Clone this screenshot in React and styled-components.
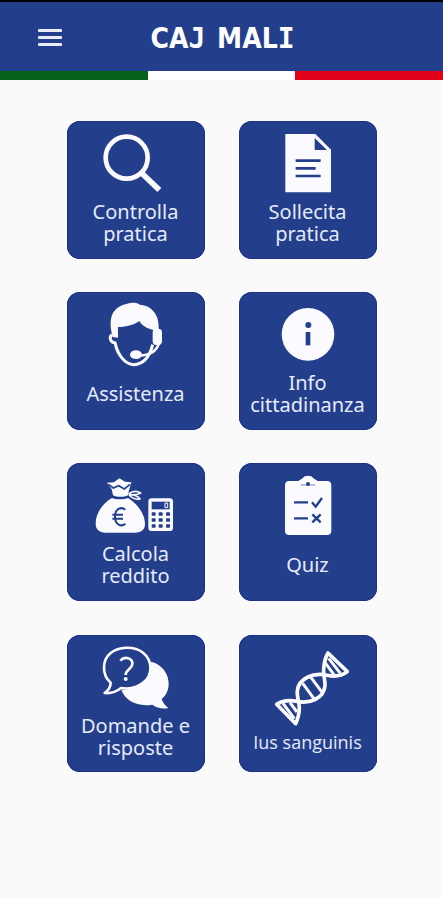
import React from "react";
import styled, { createGlobalStyle } from "styled-components";

const GlobalStyle = createGlobalStyle`
  :root {
    --blue: #233f8c;
    --edge: #1a3288;
    --page: #fafafa;
    --label: #e6eafa;
  }
  body {
    margin: 0;
    background-color: white;
    font-family: "Noto Sans", "Open Sans", sans-serif;
  }
`;

const Page = styled.div`
  height: 898px;
  background-color: var(--page);
  border-top: 2px solid black;
  box-sizing: border-box;
  overflow: hidden;
`;
const Header = styled.header`
  height: 69px;
  background-color: var(--blue);
  display: grid;
  grid-template-columns: 38px 24px 1fr 60px;
  align-items: center;
  box-sizing: border-box;
  padding-top: 1px;
`;
const MenuButton = styled.button`
  grid-column: 2;
  border: 0;
  padding: 0;
  background: none;
  display: flex;
  flex-direction: column;
  gap: 4px;
`;
const MenuBar = styled.span`
  width: 24px;
  height: 3px;
  border-radius: 1px;
  background-color: #e9edfb;
`;
const Title = styled.h1`
  margin: 0;
  padding-top: 4px;
  text-align: center;
  color: white;
  font-family: "DejaVu Sans Condensed", "DejaVu Sans", sans-serif;
  font-stretch: condensed;
  font-size: 28px;
  line-height: 40px;
  font-weight: 700;
  word-spacing: 3px;
  white-space: nowrap;
`;
const Slab = styled.span`
  font-family: "DejaVu Sans Mono", monospace;
  font-stretch: normal;
`;
const Flag = styled.div`
  display: flex;
  height: 9px;
`;
const Stripe = styled.div`
  flex: 1;
  background-color: ${(p) => p.$color};
`;
const Tiles = styled.main`
  display: grid;
  grid-template-columns: 138px 138px;
  grid-auto-rows: 137.5px;
  column-gap: 34px;
  row-gap: 33.7px;
  padding: 41px 0 0 67px;
`;
const Tile = styled.button`
  display: flex;
  flex-direction: column;
  align-items: center;
  padding: 0;
  border: 0;
  border-radius: 13px;
  background-color: var(--blue);
  box-shadow: inset 0 0 0 1px var(--edge);
  color: var(--label);
  font-family: inherit;
`;
const Picture = styled.svg`
  width: 138px;
  height: 80px;
  flex: none;
  overflow: visible;
  color: #fafaff;
`;
const Label = styled.span`
  height: 44px;
  margin-right: 1px;
  padding-top: ${(p) => p.$drop || 0}px;
  display: flex;
  flex-direction: column;
  justify-content: center;
  box-sizing: border-box;
  font-family: ${(p) => (p.$plain ? '"Open Sans"' : '"Noto Sans"')}, sans-serif;
  font-size: ${(p) => p.$size || 20}px;
  line-height: 22px;
  white-space: nowrap;
`;

const Search = () => (
  <g fill="none" stroke="currentColor">
    <circle cx="200" cy="128" r="63" strokeWidth="14" />
    <path d="M244 173l54 52" strokeWidth="17" />
  </g>
);

const Document = () => (
  <g>
    <path d="M160 57h90l47 47v128H160z" fill="currentColor" />
    <path d="M248 69v36h37z" fill="var(--blue)" />
    <path d="M191 137h75M191 160h60M191 183h75" stroke="var(--blue)" strokeWidth="8" />
  </g>
);

const Operator = () => (
  <g>
    <path
      d="M158 153C145 102 151 66 199 54c15-5 31-6 40 2 36 2 60 31 57 73l-17 3c-18-5-33-13-41-27-15 11-37 18-64 18v32z"
      fill="currentColor"
    />
    <path
      d="M156 146c-10 6-5 24 9 24 7 35 29 65 56 66 28-1 48-24 57-60"
      fill="none"
      stroke="currentColor"
      strokeWidth="9"
      strokeLinejoin="round"
    />
    <rect x="278" y="128" width="28" height="49" rx="11" fill="currentColor" />
    <path d="M297 172c-8 24-28 36-58 36" fill="none" stroke="currentColor" strokeWidth="8" />
    <ellipse cx="228" cy="206" rx="18" ry="13" fill="currentColor" />
  </g>
);

const Info = () => (
  <g>
    <circle cx="228" cy="145" r="79" fill="currentColor" />
    <circle cx="229" cy="117" r="9" fill="var(--blue)" />
    <path d="M221 138h14v40h-14z" fill="var(--blue)" />
  </g>
);

const Money = () => (
  <g>
    <path
      d="M156 123c8 5 39 5 48 0 28 17 51 48 51 78 0 17-12 26-30 26h-89c-18 0-29-11-29-27 0-31 21-62 49-77z"
      fill="currentColor"
    />
    <path
      d="M141 77l21-1 16-12 17 10 19 2-7 24-3 15c-13 6-33 6-45 0l-4-18z"
      fill="currentColor"
    />
    <path d="M145 82l15 11 16-7 17 10 17-14" fill="none" stroke="var(--blue)" strokeWidth="5" />
    <path
      d="M206 111c12-9 24-10 36-3-10 5-22 7-34 5 14 0 26 4 32 13-12 2-24-3-33-12"
      fill="none"
      stroke="currentColor"
      strokeWidth="5"
      strokeLinejoin="round"
    />
    <path
      d="M196 158c-12-10-31-3-31 21s19 32 31 21M157 173h32M157 185h32"
      fill="none"
      stroke="var(--blue)"
      strokeWidth="6"
    />
    <rect x="265" y="124" width="74" height="98" rx="10" fill="currentColor" />
    <path d="M275 134h54v23h-54z" fill="var(--blue)" />
    <path d="M315 138h8v14h-8z" fill="none" stroke="currentColor" strokeWidth="3" />
    <g fill="var(--blue)">
      {[166, 184, 202].map((y) =>
        [275, 296, 318].map((x) => (
          <rect key={`${x}-${y}`} x={x} y={y} width="12" height="10" rx="2" />
        ))
      )}
    </g>
  </g>
);

const Clipboard = () => (
  <g>
    <path
      d="M172 72h27l13-8c5-10 27-10 32 0l13 8h28q13 0 13 13v136q0 13-13 13H172q-13 0-13-13V85q0-13 13-13z"
      fill="currentColor"
    />
    <path d="M206 84h44" stroke="var(--blue)" strokeWidth="3" opacity="0.6" />
    <circle cx="228" cy="81" r="6" fill="var(--blue)" />
    <path
      d="M186 136h42M186 184h42M240 136l11 13 19-26M241 172l25 24M266 172l-25 24"
      fill="none"
      stroke="var(--blue)"
      strokeWidth="7"
    />
  </g>
);

const Chat = () => (
  <g>
    <path
      d="M273 98c34 8 54 38 53 68-1 20-9 34-21 45 4 12 12 20 20 26-17 4-34 0-48-10-45 7-79-10-93-43 52-4 93-31 89-86z"
      fill="currentColor"
    />
    <path
      d="M152 161c-27-23-26-67-1-88 25-22 73-22 98-2 29 23 30 67 1 90-19 15-44 20-67 16-15 12-32 17-49 15 12-9 18-19 18-31z"
      fill="var(--blue)"
      stroke="currentColor"
      strokeWidth="8"
      strokeLinejoin="round"
    />
    <path
      d="M181 95c12-14 37-9 36 10-1 16-20 16-20 33"
      fill="none"
      stroke="currentColor"
      strokeWidth="8"
    />
    <circle cx="197" cy="150" r="6" fill="currentColor" />
  </g>
);

const Dna = () => (
  <g fill="none" stroke="currentColor" strokeWidth="11" strokeLinejoin="round">
    <path
      d="M153 223l34 46M174 221l21 28M212 163l36 49M235 143l36 48M277 98l31 42M290 88l35 45"
      strokeWidth="9"
    />
    <path d="M134 226c19-13 41-13 62-9 38 8 80-9 83-47 1-17-6-33-4-50 1-17 5-34 13-48l58 56c-18 14-39 16-60 11-43-10-86 10-90 46-2 18 6 34 6 51 0 17-4 32-11 48z" />
  </g>
);

const TilesData = [
  { lines: ["Controlla", "pratica"], icon: Search },
  { lines: ["Sollecita", "pratica"], icon: Document },
  { lines: ["Assistenza"], icon: Operator },
  { lines: ["Info", "cittadinanza"], icon: Info },
  { lines: ["Calcola", "reddito"], icon: Money },
  { lines: ["Quiz"], icon: Clipboard },
  { lines: ["Domande e", "risposte"], icon: Chat },
  { lines: ["Ius sanguinis"], icon: Dna, plain: true, size: 18, drop: 11 },
];

const App = () => {
  return (
    <Page>
      <GlobalStyle />
      <Header>
        <MenuButton aria-label="Menu">
          <MenuBar />
          <MenuBar />
          <MenuBar />
        </MenuButton>
        <Title>
          CA<Slab>J</Slab> MAL<Slab>I</Slab>
        </Title>
      </Header>
      <Flag>
        <Stripe $color="#056319" />
        <Stripe $color="#ffffff" />
        <Stripe $color="#e00019" />
      </Flag>
      <Tiles>
        {TilesData.map(({ lines, icon: Icon, plain, size, drop }) => (
          <Tile key={lines[0]}>
            <Picture viewBox="21 18 414 240">
              <Icon />
            </Picture>
            <Label $plain={plain} $size={size} $drop={drop}>
              {lines.map((line) => (
                <span key={line}>{line}</span>
              ))}
            </Label>
          </Tile>
        ))}
      </Tiles>
    </Page>
  );
};

export default App;
